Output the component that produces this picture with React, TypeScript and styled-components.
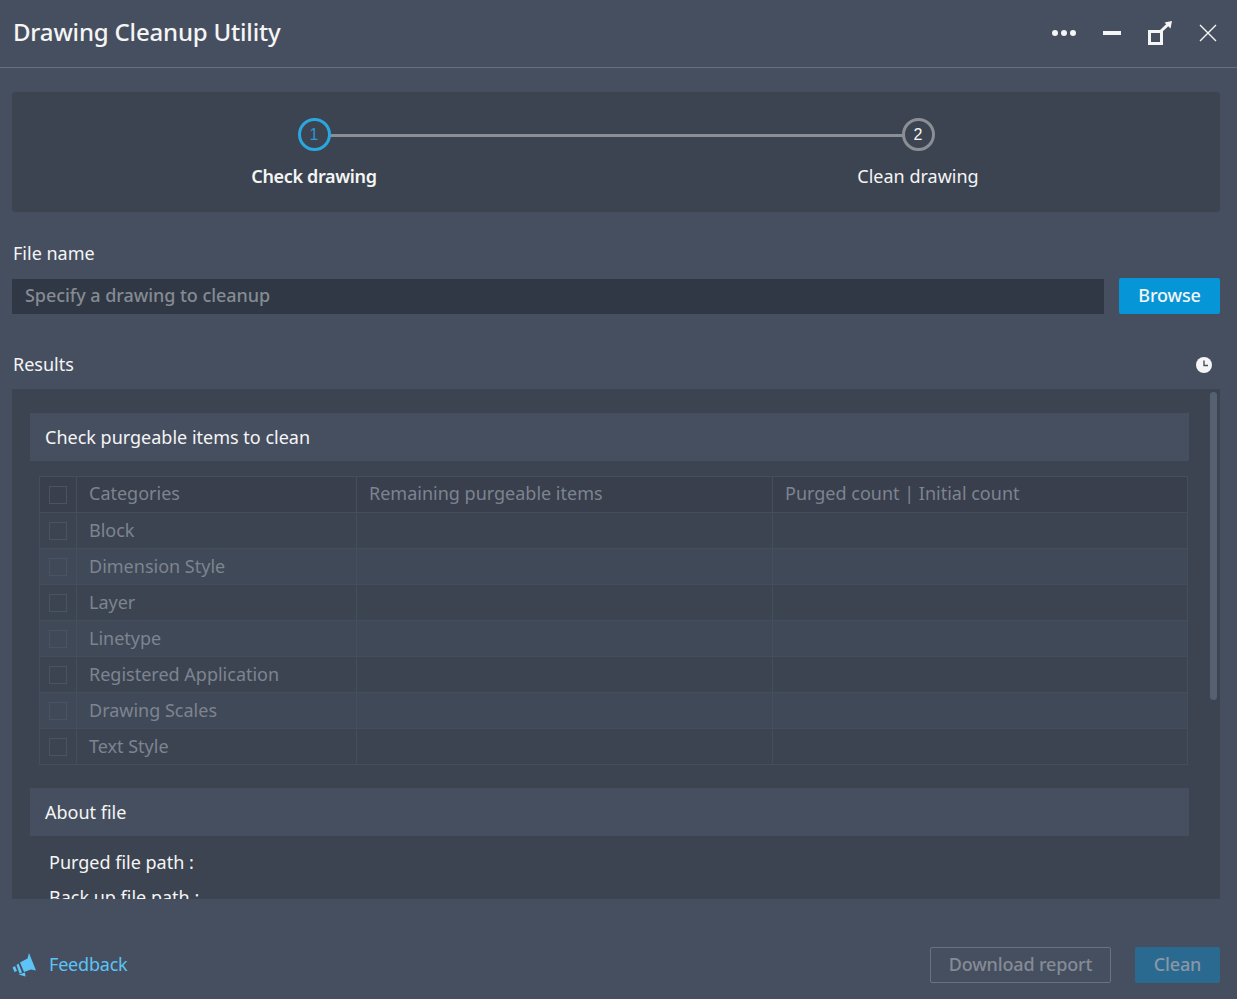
import { FunctionComponent } from 'react';
import styled, { createGlobalStyle } from 'styled-components';

const GlobalStyle = createGlobalStyle`
  html, body {
    margin: 0;
    padding: 0;
    background: #464f60;
  }
  * {
    box-sizing: border-box;
  }
`;

const Page = styled.div`
  width: 1237px;
  height: 999px;
  overflow: hidden;
  background: #464f60;
  color: #f5f5f5;
  font-family: 'Noto Sans', 'Open Sans', sans-serif;
  font-size: 18px;
`;

const TitleBar = styled.header`
  height: 68px;
  border-bottom: 1px solid #667080;
  padding: 0 20px 1px 13px;
  display: flex;
  align-items: center;
  justify-content: space-between;
`;

const Title = styled.h1`
  margin: 0 0 4px;
  font-size: 24px;
  font-weight: 500;
  letter-spacing: -0.18px;
`;

const WindowControls = styled.div`
  display: flex;
  align-items: center;
  gap: 27px;
`;

const ControlIcon = styled.svg`
  display: block;
  color: #f5f5f5;
`;

const Body = styled.main`
  padding: 24px 17px 0 12px;
`;

const Stepper = styled.section`
  height: 120px;
  background: #3c4452;
  border-radius: 4px;
  display: grid;
  grid-template-columns: 1fr 1fr;
  padding-top: 26px;
`;

const Step = styled.div<{ $last?: boolean }>`
  position: relative;
  display: flex;
  flex-direction: column;
  align-items: center;
  gap: 13px;

  ${({ $last }) =>
    !$last &&
    `
    &::after {
      content: '';
      position: absolute;
      left: 50%;
      width: 100%;
      top: 16px;
      height: 3px;
      background: #8b8f95;
    }
  `}
`;

const StepCircle = styled.div<{ $active?: boolean }>`
  position: relative;
  z-index: 1;
  width: 33px;
  height: 33px;
  border-radius: 50%;
  border: 3px solid ${({ $active }) => ($active ? '#2ba7df' : '#8b8f95')};
  background: #3c4452;
  color: ${({ $active }) => ($active ? '#2b95d8' : '#f5f5f5')};
  font-family: 'Liberation Sans', sans-serif;
  font-size: 16px;
  display: flex;
  align-items: center;
  justify-content: center;
`;

const StepLabel = styled.div<{ $active?: boolean }>`
  font-size: 18px;
  line-height: 24px;
  font-weight: ${({ $active }) => ($active ? 600 : 400)};
  letter-spacing: ${({ $active }) => ($active ? '-0.35px' : '0')};
  color: #f5f5f5;
`;

const FieldLabel = styled.div`
  margin: 29px 0 0 1px;
  height: 24px;
  line-height: 24px;
  font-size: 18px;
`;

const FileRow = styled.div`
  margin-top: 13px;
  display: flex;
  align-items: center;
  gap: 15px;
`;

const FileInput = styled.div`
  flex: 1;
  height: 35px;
  background: #2f3844;
  color: #858b93;
  padding-left: 13px;
  font-size: 18px;
  line-height: 32px;
  font-weight: 500;
  letter-spacing: -0.05px;
`;

const Button = styled.button<{ $variant: 'primary' | 'disabled' | 'outline' }>`
  height: 36px;
  border-radius: 2px;
  font-family: inherit;
  font-size: 18px;
  font-weight: 500;
  letter-spacing: -0.15px;
  padding: 0 0 2px;
  ${({ $variant }) =>
    $variant === 'primary'
      ? 'background: #0696d7; color: #f5f5f5; border: 0;'
      : $variant === 'disabled'
        ? 'background: #2a6a90; color: #8b97a5; border: 0;'
        : 'background: transparent; color: #858b96; border: 1px solid #687282;'}
`;

const BrowseButton = styled(Button)`
  width: 101px;
`;

const ResultsHead = styled.div`
  margin-top: 38px;
  height: 24px;
  padding: 0 8px 0 1px;
  display: flex;
  align-items: center;
  justify-content: space-between;
  font-size: 18px;

  svg {
    margin-top: 2px;
  }
`;

const ResultsPanel = styled.section`
  position: relative;
  margin-top: 13px;
  height: 510px;
  background: #3c4452;
  overflow: hidden;
  padding: 24px 31px 0 18px;
`;

const ScrollThumb = styled.div`
  position: absolute;
  top: 3px;
  right: 3px;
  width: 7px;
  height: 308px;
  border-radius: 4px;
  background: #556071;
`;

const SectionHead = styled.div`
  height: 48px;
  background: #464f60;
  padding-left: 15px;
  line-height: 48px;
  font-size: 18px;
`;

const Table = styled.table`
  margin: 15px 0 23px 9px;
  width: 1149px;
  border-collapse: collapse;
  table-layout: fixed;
  color: #7d8490;
  font-size: 18px;
`;

const Row = styled.tr<{ $striped?: boolean; $head?: boolean }>`
  height: 36px;
  background: ${({ $striped, $head }) => ($head ? '#393f4c' : $striped ? '#404958' : '#3c4452')};
`;

const Cell = styled.td`
  border: 1px solid #454e5d;
  padding: 0 12px 2px;
  font-weight: 400;
  text-align: left;
  white-space: nowrap;

  thead & {
    padding-bottom: 4px;
  }
`;

const CheckCell = styled(Cell)`
  width: 37px;
  padding: 0 0 0 9px;

  thead & {
    padding: 0 0 0 9px;
  }
`;

const NameCell = styled(Cell)`
  width: 280px;
`;

const RemainingCell = styled(Cell)`
  width: 416px;
`;

const CheckBox = styled.span`
  display: block;
  width: 18px;
  height: 18px;
  border: 1px solid #4a5362;
`;

const InfoList = styled.div`
  padding: 14px 0 0 19px;
  display: flex;
  flex-direction: column;
  gap: 10px;
`;

const InfoLine = styled.div`
  height: 25px;
  line-height: 25px;
  font-size: 18px;
`;

const Footer = styled.footer`
  margin-top: 48px;
  display: flex;
  align-items: center;
  justify-content: space-between;
`;

const FeedbackLink = styled.a`
  display: flex;
  align-items: center;
  gap: 13px;
  color: #5cc4f7;
  font-size: 18px;
  letter-spacing: -0.2px;
  padding-bottom: 1px;

  svg {
    margin-top: 1px;
  }
`;

const FeedbackText = styled.span`
  line-height: 22px;
  margin-bottom: 2px;
`;

const FooterActions = styled.div`
  display: flex;
  gap: 24px;
`;

const DownloadButton = styled(Button)`
  width: 181px;
`;

const CleanButton = styled(Button)`
  width: 85px;
`;

const categories = [
  'Block',
  'Dimension Style',
  'Layer',
  'Linetype',
  'Registered Application',
  'Drawing Scales',
  'Text Style',
];

const App: FunctionComponent = () => (
  <Page>
    <GlobalStyle />
    <TitleBar>
      <Title>Drawing Cleanup Utility</Title>
      <WindowControls>
        <ControlIcon width="24" height="24" viewBox="0 0 24 24" fill="currentColor">
          <circle cx="3" cy="12" r="3" />
          <circle cx="12" cy="12" r="3" />
          <circle cx="21" cy="12" r="3" />
        </ControlIcon>
        <ControlIcon width="18" height="24" viewBox="0 0 18 24" fill="currentColor">
          <rect x="0" y="10" width="18" height="4" />
        </ControlIcon>
        <ControlIcon width="24" height="24" viewBox="0 0 24 24" fill="none">
          <rect x="1.5" y="10.5" width="12" height="12" stroke="currentColor" strokeWidth="3" />
          <path d="M12 11 L20 3.5" stroke="currentColor" strokeWidth="3" />
          <path d="M16.5 1.5 L24 0 L22.5 7.5 Z" fill="currentColor" />
        </ControlIcon>
        <ControlIcon width="18" height="24" viewBox="0 0 18 24" fill="none" stroke="currentColor" strokeWidth="1.4">
          <path d="M1 4 L17 20 M17 4 L1 20" />
        </ControlIcon>
      </WindowControls>
    </TitleBar>
    <Body>
      <Stepper>
        <Step>
          <StepCircle $active>1</StepCircle>
          <StepLabel $active>Check drawing</StepLabel>
        </Step>
        <Step $last>
          <StepCircle>2</StepCircle>
          <StepLabel>Clean drawing</StepLabel>
        </Step>
      </Stepper>
      <FieldLabel>File name</FieldLabel>
      <FileRow>
        <FileInput>Specify a drawing to cleanup</FileInput>
        <BrowseButton $variant="primary">Browse</BrowseButton>
      </FileRow>
      <ResultsHead>
        <span>Results</span>
        <svg width="16" height="16" viewBox="0 0 16 16">
          <circle cx="8" cy="8" r="8" fill="#f5f5f5" />
          <path d="M8 3.5 V8.5 H12" fill="none" stroke="#464f60" strokeWidth="1.4" />
        </svg>
      </ResultsHead>
      <ResultsPanel>
        <ScrollThumb />
        <SectionHead>Check purgeable items to clean</SectionHead>
        <Table>
          <thead>
            <Row $head>
              <CheckCell as="th">
                <CheckBox />
              </CheckCell>
              <NameCell as="th">Categories</NameCell>
              <RemainingCell as="th">Remaining purgeable items</RemainingCell>
              <Cell as="th">Purged count | Initial count</Cell>
            </Row>
          </thead>
          <tbody>
            {categories.map((category, index) => (
              <Row key={category} $striped={index % 2 === 1}>
                <CheckCell>
                  <CheckBox />
                </CheckCell>
                <NameCell>{category}</NameCell>
                <RemainingCell />
                <Cell />
              </Row>
            ))}
          </tbody>
        </Table>
        <SectionHead>About file</SectionHead>
        <InfoList>
          <InfoLine>Purged file path :</InfoLine>
          <InfoLine>Back up file path :</InfoLine>
        </InfoList>
      </ResultsPanel>
      <Footer>
        <FeedbackLink>
          <svg width="24" height="24" viewBox="0 0 24 24" fill="#5cc4f7">
            <path d="M8 9.5 L15.5 5.5 L17 0 L24 17.5 L19 16.5 L12 19 Z" />
            <path d="M4.5 12 L6.5 10.5 L10 19.5 L7.5 20.5 Z" />
            <path d="M0.5 14.5 L3 13 L5 18 L2.5 19 Z" />
            <path d="M6.5 21.5 L13 19.5 L13.5 23.5 Z" />
          </svg>
          <FeedbackText>Feedback</FeedbackText>
        </FeedbackLink>
        <FooterActions>
          <DownloadButton $variant="outline">Download report</DownloadButton>
          <CleanButton $variant="disabled">Clean</CleanButton>
        </FooterActions>
      </Footer>
    </Body>
  </Page>
);

export default App;
